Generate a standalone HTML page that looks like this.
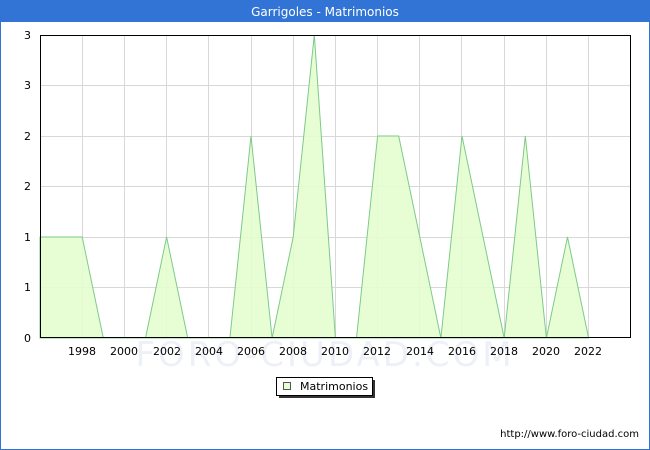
<!DOCTYPE html>
<html><head><meta charset="utf-8"><style>
html,body{margin:0;padding:0;background:#fff}
body{width:650px;height:450px;position:relative;overflow:hidden;font-family:"DejaVu Sans","Liberation Sans",sans-serif}
</style></head><body>
<svg width="650" height="450" xmlns="http://www.w3.org/2000/svg" style="position:absolute;left:0;top:0">
<rect x="0.5" y="0.5" width="649" height="449" fill="#fff" stroke="#3273d6"/>
<rect x="0" y="0" width="650" height="22" fill="#3273d6"/>
<text x="325" y="16" fill="#fff" font-size="12" text-anchor="middle" font-family="DejaVu Sans,sans-serif">Garrigoles - Matrimonios</text>
<text x="325" y="366" fill="#eef0f8" font-size="34" text-anchor="middle" font-family="DejaVu Sans,sans-serif" letter-spacing="3">FORO-CIUDAD.COM</text>
<g stroke="#d8d8d8" stroke-width="1">
<line x1="40" y1="85.5" x2="631" y2="85.5"/><line x1="40" y1="136.5" x2="631" y2="136.5"/><line x1="40" y1="186.5" x2="631" y2="186.5"/><line x1="40" y1="237.5" x2="631" y2="237.5"/><line x1="40" y1="287.5" x2="631" y2="287.5"/>
<line x1="82.5" y1="35" x2="82.5" y2="338"/><line x1="124.5" y1="35" x2="124.5" y2="338"/><line x1="166.5" y1="35" x2="166.5" y2="338"/><line x1="208.5" y1="35" x2="208.5" y2="338"/><line x1="251.5" y1="35" x2="251.5" y2="338"/><line x1="293.5" y1="35" x2="293.5" y2="338"/><line x1="335.5" y1="35" x2="335.5" y2="338"/><line x1="377.5" y1="35" x2="377.5" y2="338"/><line x1="419.5" y1="35" x2="419.5" y2="338"/><line x1="461.5" y1="35" x2="461.5" y2="338"/><line x1="504.5" y1="35" x2="504.5" y2="338"/><line x1="546.5" y1="35" x2="546.5" y2="338"/><line x1="588.5" y1="35" x2="588.5" y2="338"/>
</g>
<polygon fill="#e4fecf" fill-opacity="0.9" stroke="#7ec98a" stroke-width="1" points="40,338 40,237 61.1,237 82.2,237 103.3,338 124.4,338 145.5,338 166.6,237 187.7,338 208.8,338 229.9,338 251,136 272.1,338 293.2,237 314.3,35 335.4,338 356.5,338 377.6,136 398.7,136 419.8,237 440.9,338 462,136 483.1,237 504.2,338 525.3,136 546.4,338 567.5,237 588.6,338"/>
<rect x="40.5" y="35.5" width="590" height="302" fill="none" stroke="#000"/>
<g font-size="11" fill="#000" font-family="DejaVu Sans,sans-serif" text-anchor="end">
<text x="31" y="39">3</text><text x="31" y="89">3</text><text x="31" y="140">2</text><text x="31" y="190">2</text><text x="31" y="241">1</text><text x="31" y="291">1</text><text x="31" y="342">0</text>
</g>
<g font-size="11" fill="#000" font-family="DejaVu Sans,sans-serif" text-anchor="middle">
<text x="82" y="355">1998</text><text x="124" y="355">2000</text><text x="167" y="355">2002</text><text x="209" y="355">2004</text><text x="251" y="355">2006</text><text x="293" y="355">2008</text><text x="335" y="355">2010</text><text x="377" y="355">2012</text><text x="420" y="355">2014</text><text x="462" y="355">2016</text><text x="504" y="355">2018</text><text x="546" y="355">2020</text><text x="588" y="355">2022</text>
</g>
<rect x="279" y="380" width="96" height="18" fill="#333"/>
<rect x="276.5" y="377.5" width="96" height="18" fill="#fff" stroke="#000"/>
<rect x="283.5" y="382.5" width="7" height="7" fill="#e4fecf" stroke="#555"/>
<text x="300" y="390" font-size="11" font-family="DejaVu Sans,sans-serif">Matrimonios</text>
<text x="639" y="437" font-size="10" text-anchor="end" font-family="DejaVu Sans,sans-serif">http://www.foro-ciudad.com</text>
</svg>
</body></html>
